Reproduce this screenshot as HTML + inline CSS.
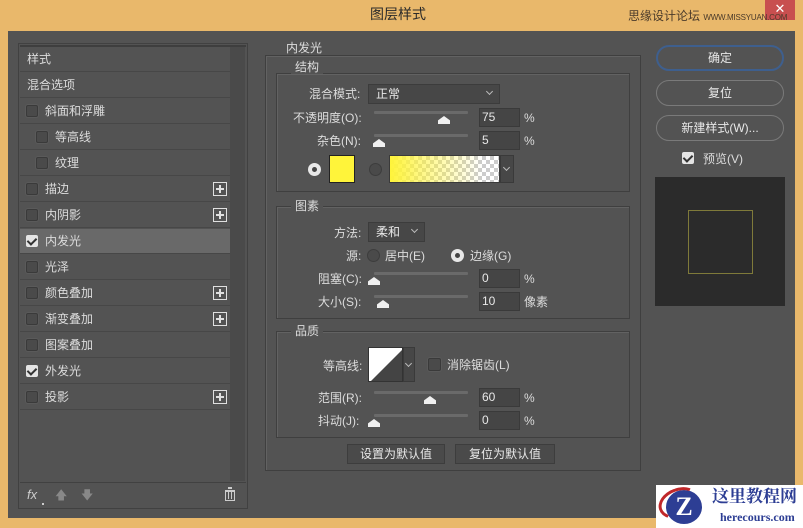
<!DOCTYPE html>
<html><head><meta charset="utf-8"><style>
*{margin:0;padding:0;box-sizing:border-box}
body{width:803px;height:528px;background:#e9b86b;position:relative;overflow:hidden;font-family:"Liberation Sans","Noto Sans CJK SC",sans-serif;font-size:12px;color:#dcdcdc}
.a{position:absolute}
.t{position:absolute;white-space:nowrap;line-height:14px}
.main{left:8px;top:31px;width:787px;height:487px;background:#535353}
.row{position:absolute;left:20px;width:210px;height:25px;background:#535353;border-bottom:1px solid #474747}
.row span{position:absolute;top:5px;line-height:14px}
.cb{position:absolute;width:12px;height:12px;border:1px solid #3a3a3a;background:#4a4a4a;border-radius:2px;box-shadow:0 0 0 1px #5a5a5a}
.cbon{position:absolute;width:12px;height:12px;background:#e4e4e4;border-radius:2px}
.cbon:after{content:"";position:absolute;left:3px;top:1px;width:4px;height:7px;border:solid #333;border-width:0 2px 2px 0;transform:rotate(45deg)}
.plus{position:absolute;left:193px;top:5px;width:14px;height:14px;border:1px solid #e0e0e0}
.plus:before{content:"";position:absolute;left:2px;top:5px;width:8px;height:2px;background:#e0e0e0}
.plus:after{content:"";position:absolute;left:5px;top:2px;width:2px;height:8px;background:#e0e0e0}
.grp{position:absolute;border:1px solid #3f3f3f;box-shadow:inset 1px 1px 0 #626262}
.lg{position:absolute;background:#535353;padding:0 4px;line-height:14px}
.track{position:absolute;height:3px;background:#6a6a6a;border-radius:1px}
.thumb{position:absolute;width:0;height:0}
.thumb:before{content:"";position:absolute;left:-6px;top:0;width:12px;height:8px;background:#f0f0f0;clip-path:polygon(50% 0,100% 55%,100% 100%,0 100%,0 55%)}
.fld{position:absolute;width:41px;height:19px;background:#454545;border:1px solid #3a3a3a;padding-left:2px;line-height:17px;color:#e8e8e8}
.sel{position:absolute;background:#474747;border:1px solid #3c3c3c;height:20px;line-height:18px;padding-left:7px;color:#e8e8e8}
.chev{position:absolute;width:5px;height:5px;border:solid #bbb;border-width:0 1px 1px 0;transform:rotate(45deg)}
.rad{position:absolute;width:13px;height:13px;border-radius:50%;background:#4a4a4a;border:1px solid #3d3d3d}
.radon{position:absolute;width:13px;height:13px;border-radius:50%;background:#e8e8e8}
.radon:after{content:"";position:absolute;left:4px;top:4px;width:5px;height:5px;border-radius:50%;background:#444}
.btn{position:absolute;left:656px;width:128px;height:26px;border:1px solid #7a7a7a;border-radius:13px;text-align:center;line-height:24px;color:#e8e8e8}
.btn2{position:absolute;height:20px;background:#4a4a4a;border:1px solid #3d3d3d;text-align:center;line-height:18px;color:#e8e8e8}
</style></head><body>
<div class="t" style="left:370px;top:7px;font-size:14px;color:#2a2a2a">图层样式</div>
<div class="a" style="left:765px;top:0;width:30px;height:20px;background:#c84f4f;color:#fff;text-align:center;line-height:18px;font-size:13px">✕</div>
<div class="t" style="left:628px;top:9px;font-size:12px;color:#4a3a2a">思缘设计论坛 <span style="font-size:8px;letter-spacing:-0.2px">WWW.MISSYUAN.COM</span></div>
<div class="a main"></div>

<!-- left panel -->
<div class="a" style="left:18px;top:43px;width:230px;height:466px;border:1px solid #414141;background:#535353"></div>
<div class="a" style="left:20px;top:45px;width:226px;height:2px;background:#3e3e3e"></div>
<div class="a" style="left:230px;top:47px;width:15px;height:434px;background:#4a4a4a"></div>
<div class="row" style="top:47px"><span style="left:7px">样式</span></div>
<div class="row" style="top:73px"><span style="left:7px">混合选项</span></div>
<div class="row" style="top:99px"><div class="cb" style="left:6px;top:6px"></div><span style="left:25px">斜面和浮雕</span></div>
<div class="row" style="top:125px"><div class="cb" style="left:16px;top:6px"></div><span style="left:35px">等高线</span></div>
<div class="row" style="top:151px"><div class="cb" style="left:16px;top:6px"></div><span style="left:35px">纹理</span></div>
<div class="row" style="top:177px"><div class="cb" style="left:6px;top:6px"></div><span style="left:25px">描边</span><div class="plus"></div></div>
<div class="row" style="top:203px"><div class="cb" style="left:6px;top:6px"></div><span style="left:25px">内阴影</span><div class="plus"></div></div>
<div class="row" style="top:229px;background:#696969"><div class="cbon" style="left:6px;top:6px"></div><span style="left:25px">内发光</span></div>
<div class="row" style="top:255px"><div class="cb" style="left:6px;top:6px"></div><span style="left:25px">光泽</span></div>
<div class="row" style="top:281px"><div class="cb" style="left:6px;top:6px"></div><span style="left:25px">颜色叠加</span><div class="plus"></div></div>
<div class="row" style="top:307px"><div class="cb" style="left:6px;top:6px"></div><span style="left:25px">渐变叠加</span><div class="plus"></div></div>
<div class="row" style="top:333px"><div class="cb" style="left:6px;top:6px"></div><span style="left:25px">图案叠加</span></div>
<div class="row" style="top:359px"><div class="cbon" style="left:6px;top:6px"></div><span style="left:25px">外发光</span></div>
<div class="row" style="top:385px"><div class="cb" style="left:6px;top:6px"></div><span style="left:25px">投影</span><div class="plus"></div></div>
<div class="a" style="left:20px;top:482px;width:226px;height:1px;background:#414141"></div>
<div class="t" style="left:27px;top:488px;font-style:italic;font-size:13px;color:#ccc">fx</div>
<div class="a" style="left:42px;top:503px;width:2px;height:2px;background:#ccc"></div>
<div class="t" style="left:55px;top:488px;color:#888;font-size:12px">🡅</div>
<div class="t" style="left:81px;top:488px;color:#888;font-size:12px">🡇</div>
<div class="a" style="left:225px;top:490px;width:10px;height:11px;border:1px solid #ccc;border-top-width:2px"></div>
<div class="a" style="left:228px;top:492px;width:1px;height:7px;background:#ccc"></div>
<div class="a" style="left:231px;top:492px;width:1px;height:7px;background:#ccc"></div>
<div class="a" style="left:228px;top:487px;width:4px;height:2px;background:#ccc"></div>

<!-- middle -->
<div class="grp" style="left:265px;top:55px;width:376px;height:416px"></div>
<div class="lg" style="left:282px;top:41px">内发光</div>
<div class="grp" style="left:276px;top:73px;width:354px;height:119px"></div>
<div class="lg" style="left:291px;top:60px">结构</div>
<div class="t" style="left:309px;top:87px">混合模式:</div>
<div class="sel" style="left:368px;top:84px;width:132px">正常<div class="chev" style="left:118px;top:4px"></div></div>
<div class="t" style="left:293px;top:111px">不透明度(O):</div>
<div class="track" style="left:374px;top:111px;width:94px"></div>
<div class="thumb" style="left:444px;top:116px"></div>
<div class="fld" style="left:479px;top:108px">75</div><div class="t" style="left:524px;top:111px">%</div>
<div class="t" style="left:317px;top:134px">杂色(N):</div>
<div class="track" style="left:374px;top:134px;width:94px"></div>
<div class="thumb" style="left:379px;top:139px"></div>
<div class="fld" style="left:479px;top:131px">5</div><div class="t" style="left:524px;top:134px">%</div>
<div class="radon" style="left:308px;top:163px"></div>
<div class="a" style="left:329px;top:155px;width:26px;height:28px;background:#fff43a;border:1px solid #222"></div>
<div class="rad" style="left:369px;top:163px"></div>
<div class="a" style="left:389px;top:155px;width:111px;height:28px;border:1px solid #3a3a3a;background:linear-gradient(90deg,#fff43a 0%,rgba(255,244,58,0.6) 30%,rgba(255,244,58,0) 85%),repeating-conic-gradient(#ccc 0 25%,#fff 0 50%) 0 0/8px 8px"></div>
<div class="a" style="left:500px;top:155px;width:14px;height:28px;background:#474747;border:1px solid #3a3a3a"><div class="chev" style="left:3px;top:9px"></div></div>

<div class="grp" style="left:276px;top:206px;width:354px;height:113px"></div>
<div class="lg" style="left:291px;top:199px">图素</div>
<div class="t" style="left:334px;top:226px">方法:</div>
<div class="sel" style="left:368px;top:222px;width:57px">柔和<div class="chev" style="left:43px;top:4px"></div></div>
<div class="t" style="left:346px;top:249px">源:</div>
<div class="rad" style="left:367px;top:249px"></div>
<div class="t" style="left:385px;top:249px">居中(E)</div>
<div class="radon" style="left:451px;top:249px"></div>
<div class="t" style="left:470px;top:249px">边缘(G)</div>
<div class="t" style="left:318px;top:272px">阻塞(C):</div>
<div class="track" style="left:374px;top:272px;width:94px"></div>
<div class="thumb" style="left:374px;top:277px"></div>
<div class="fld" style="left:479px;top:269px">0</div><div class="t" style="left:524px;top:272px">%</div>
<div class="t" style="left:318px;top:295px">大小(S):</div>
<div class="track" style="left:374px;top:295px;width:94px"></div>
<div class="thumb" style="left:383px;top:300px"></div>
<div class="fld" style="left:479px;top:292px">10</div><div class="t" style="left:524px;top:295px">像素</div>

<div class="grp" style="left:276px;top:331px;width:354px;height:107px"></div>
<div class="lg" style="left:291px;top:324px">品质</div>
<div class="t" style="left:323px;top:359px">等高线:</div>
<div class="a" style="left:368px;top:347px;width:35px;height:35px;background:#fff;border:1px solid #333;overflow:hidden"><svg width="35" height="35" style="display:block"><polygon points="35,0 35,35 0,35" fill="#444"/></svg></div>
<div class="a" style="left:403px;top:347px;width:12px;height:35px;background:#474747;border:1px solid #3a3a3a"><div class="chev" style="left:2px;top:13px"></div></div>
<div class="cb" style="left:428px;top:358px;width:13px;height:13px"></div>
<div class="t" style="left:447px;top:358px">消除锯齿(L)</div>
<div class="t" style="left:318px;top:391px">范围(R):</div>
<div class="track" style="left:374px;top:391px;width:94px"></div>
<div class="thumb" style="left:430px;top:396px"></div>
<div class="fld" style="left:479px;top:388px">60</div><div class="t" style="left:524px;top:391px">%</div>
<div class="t" style="left:318px;top:414px">抖动(J):</div>
<div class="track" style="left:374px;top:414px;width:94px"></div>
<div class="thumb" style="left:374px;top:419px"></div>
<div class="fld" style="left:479px;top:411px">0</div><div class="t" style="left:524px;top:414px">%</div>
<div class="btn2" style="left:347px;top:444px;width:98px">设置为默认值</div>
<div class="btn2" style="left:455px;top:444px;width:100px">复位为默认值</div>

<!-- right -->
<div class="btn" style="top:45px;border:2px solid #3e5f8e;line-height:22px">确定</div>
<div class="btn" style="top:80px">复位</div>
<div class="btn" style="top:115px">新建样式(W)...</div>
<div class="cbon" style="left:682px;top:152px"></div>
<div class="t" style="left:703px;top:152px">预览(V)</div>
<div class="a" style="left:655px;top:177px;width:130px;height:129px;background:#2b2b2b"></div>
<div class="a" style="left:688px;top:210px;width:65px;height:64px;border:1px solid #7f7a3a"></div>

<!-- watermark -->
<div class="a" style="left:656px;top:485px;width:147px;height:43px;background:#fff"></div>
<div class="a" style="left:666px;top:490px;width:36px;height:34px;border-radius:50%;background:#2d3e94;color:#fff;font-weight:bold;font-size:26px;text-align:center;line-height:34px;font-family:'Liberation Serif',serif">Z</div>
<div class="a" style="left:658px;top:488px;width:42px;height:30px;border:3px solid #c0282a;border-radius:50%;border-right-color:transparent;border-bottom-color:transparent;transform:rotate(-20deg)"></div>
<div class="t" style="left:712px;top:487px;font-size:17px;font-weight:bold;color:#2d3e94;line-height:20px;font-family:'Liberation Serif','Noto Serif CJK SC',serif">这里教程网</div>
<div class="t" style="left:720px;top:510px;font-size:12px;color:#2d3e94;font-weight:bold;font-family:'Liberation Serif',serif">herecours.com</div>
</body></html>
